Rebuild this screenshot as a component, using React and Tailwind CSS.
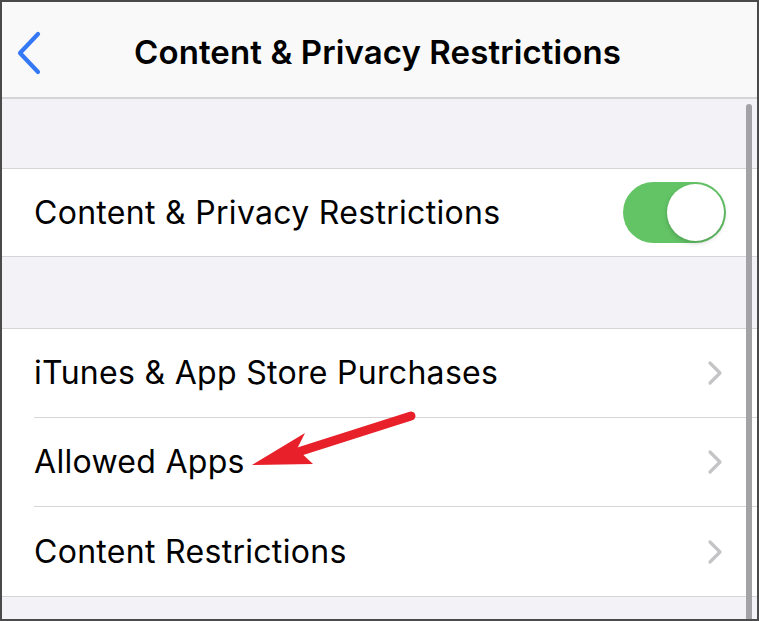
import React from "react";

const font = { fontFamily: "Inter, 'Liberation Sans', sans-serif" };

function Chevron() {
  return (
    <svg width="16" height="26" viewBox="0 0 16 26" className="shrink-0">
      <path d="M3 3 L13 13 L3 23" fill="none" stroke="#c4c4c7" strokeWidth="3.2" strokeLinecap="round" strokeLinejoin="round" />
    </svg>
  );
}

function Row({ label, last }) {
  return (
    <div className="flex h-[89px] items-center pl-[32px]">
      <div className={`flex h-full flex-1 items-center justify-between pr-[34px] ${last ? "" : "border-b border-[#d6d6d9]"}`}>
        <span className="text-[32px] text-black tracking-[0.3px]">{label}</span>
        <Chevron />
      </div>
    </div>
  );
}

export default function App() {
  return (
    <div style={font} className="relative h-[621px] w-[759px] overflow-hidden border-2 border-[#4a4a4a] bg-[#f2f2f7]">
      <div className="grid h-[97px] grid-cols-[1fr_auto_1fr] items-center border-b-2 border-[#d5d5d8] bg-[#f9f9f9] pr-[4px]">
        <div className="flex items-center pl-[12px] pt-[6px]">
          <svg width="30" height="44" viewBox="0 0 30 44">
            <path d="M24 3 L6 22 L24 41" fill="none" stroke="#3478f6" strokeWidth="4.2" strokeLinecap="round" strokeLinejoin="round" />
          </svg>
        </div>
        <div className="pt-[6px] text-[33px] font-semibold text-black tracking-[0.1px]">Content &amp; Privacy Restrictions</div>
        <div />
      </div>
      <div className="h-[69px]" />
      <div className="flex h-[89px] items-center justify-between border-y border-[#d6d6d9] bg-white pl-[32px] pr-[31px]">
        <span className="text-[32px] text-black tracking-[0.3px]">Content &amp; Privacy Restrictions</span>
        <div className="flex h-[61px] w-[103px] items-center justify-end rounded-full bg-[#63c466] pr-[2px]">
          <div className="h-[57px] w-[57px] rounded-full bg-white shadow-[0_2px_5px_rgba(0,0,0,0.2)]" />
        </div>
      </div>
      <div className="h-[71px]" />
      <div className="border-y border-[#d6d6d9] bg-white">
        <Row label="iTunes & App Store Purchases" />
        <Row label="Allowed Apps" />
        <Row label="Content Restrictions" last />
      </div>
      <div className="absolute right-[5px] top-[102px] h-[540px] w-[6px] rounded-full bg-[#a3a3a5]" />
      <svg className="absolute left-0 top-0" width="759" height="621" viewBox="0 0 759 621">
        <line x1="409" y1="414" x2="296" y2="450" stroke="#e8202a" strokeWidth="9" strokeLinecap="round" />
        <polygon points="250,463 303,431 295,447 311,462" fill="#e8202a" />
      </svg>
    </div>
  );
}
